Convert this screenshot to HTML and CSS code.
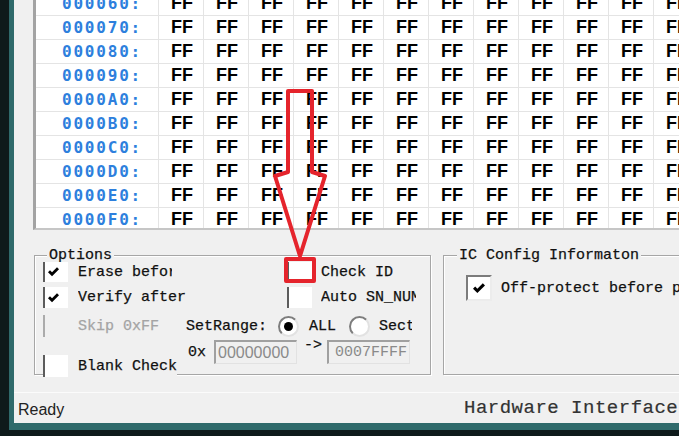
FILE: index.html
```html
<!DOCTYPE html>
<html>
<head>
<meta charset="utf-8">
<link rel="stylesheet" href="styles.css">
</head>
<body>
<div class="window">
  <div class="hexview">
    <div class="rows">
      <div class="row"><span class="addr">000060:</span><span class="ff">FF</span><span class="ff">FF</span><span class="ff">FF</span><span class="ff">FF</span><span class="ff">FF</span><span class="ff">FF</span><span class="ff">FF</span><span class="ff">FF</span><span class="ff">FF</span><span class="ff">FF</span><span class="ff">FF</span><span class="ff">FF</span></div>
      <div class="row"><span class="addr">000070:</span><span class="ff">FF</span><span class="ff">FF</span><span class="ff">FF</span><span class="ff">FF</span><span class="ff">FF</span><span class="ff">FF</span><span class="ff">FF</span><span class="ff">FF</span><span class="ff">FF</span><span class="ff">FF</span><span class="ff">FF</span><span class="ff">FF</span></div>
      <div class="row"><span class="addr">000080:</span><span class="ff">FF</span><span class="ff">FF</span><span class="ff">FF</span><span class="ff">FF</span><span class="ff">FF</span><span class="ff">FF</span><span class="ff">FF</span><span class="ff">FF</span><span class="ff">FF</span><span class="ff">FF</span><span class="ff">FF</span><span class="ff">FF</span></div>
      <div class="row"><span class="addr">000090:</span><span class="ff">FF</span><span class="ff">FF</span><span class="ff">FF</span><span class="ff">FF</span><span class="ff">FF</span><span class="ff">FF</span><span class="ff">FF</span><span class="ff">FF</span><span class="ff">FF</span><span class="ff">FF</span><span class="ff">FF</span><span class="ff">FF</span></div>
      <div class="row"><span class="addr">0000A0:</span><span class="ff">FF</span><span class="ff">FF</span><span class="ff">FF</span><span class="ff">FF</span><span class="ff">FF</span><span class="ff">FF</span><span class="ff">FF</span><span class="ff">FF</span><span class="ff">FF</span><span class="ff">FF</span><span class="ff">FF</span><span class="ff">FF</span></div>
      <div class="row"><span class="addr">0000B0:</span><span class="ff">FF</span><span class="ff">FF</span><span class="ff">FF</span><span class="ff">FF</span><span class="ff">FF</span><span class="ff">FF</span><span class="ff">FF</span><span class="ff">FF</span><span class="ff">FF</span><span class="ff">FF</span><span class="ff">FF</span><span class="ff">FF</span></div>
      <div class="row"><span class="addr">0000C0:</span><span class="ff">FF</span><span class="ff">FF</span><span class="ff">FF</span><span class="ff">FF</span><span class="ff">FF</span><span class="ff">FF</span><span class="ff">FF</span><span class="ff">FF</span><span class="ff">FF</span><span class="ff">FF</span><span class="ff">FF</span><span class="ff">FF</span></div>
      <div class="row"><span class="addr">0000D0:</span><span class="ff">FF</span><span class="ff">FF</span><span class="ff">FF</span><span class="ff">FF</span><span class="ff">FF</span><span class="ff">FF</span><span class="ff">FF</span><span class="ff">FF</span><span class="ff">FF</span><span class="ff">FF</span><span class="ff">FF</span><span class="ff">FF</span></div>
      <div class="row"><span class="addr">0000E0:</span><span class="ff">FF</span><span class="ff">FF</span><span class="ff">FF</span><span class="ff">FF</span><span class="ff">FF</span><span class="ff">FF</span><span class="ff">FF</span><span class="ff">FF</span><span class="ff">FF</span><span class="ff">FF</span><span class="ff">FF</span><span class="ff">FF</span></div>
      <div class="row"><span class="addr">0000F0:</span><span class="ff">FF</span><span class="ff">FF</span><span class="ff">FF</span><span class="ff">FF</span><span class="ff">FF</span><span class="ff">FF</span><span class="ff">FF</span><span class="ff">FF</span><span class="ff">FF</span><span class="ff">FF</span><span class="ff">FF</span><span class="ff">FF</span></div>
    </div>
  </div>

  <div class="panels">
    <div class="group options">
      <div class="group-title">Options</div>
      <div class="orow r1">
        <div class="cb left">
          <span class="box"><svg class="check" width="11" height="10" viewBox="0 0 11 10"><path d="M0 5.2 L2 3.2 L4 5.2 L9 0.2 L11 2.2 L4 9.2 Z"/></svg></span>
          <span class="lbl clip-erase">Erase before</span>
        </div>
        <div class="cb right">
          <span class="box"></span>
          <span class="lbl">Check ID</span>
        </div>
      </div>
      <div class="orow r2">
        <div class="cb left">
          <span class="box"><svg class="check" width="11" height="10" viewBox="0 0 11 10"><path d="M0 5.2 L2 3.2 L4 5.2 L9 0.2 L11 2.2 L4 9.2 Z"/></svg></span>
          <span class="lbl">Verify after</span>
        </div>
        <div class="cb right">
          <span class="box"></span>
          <span class="lbl clip-auto">Auto SN_NUM</span>
        </div>
      </div>
      <div class="orow r3">
        <div class="cb skip disabled">
          <span class="box"></span>
          <span class="lbl">Skip 0xFF</span>
        </div>
        <span class="txt">SetRange:</span>
        <span class="radio on"></span>
        <span class="txt all">ALL</span>
        <span class="radio off"></span>
        <span class="txt sect">Sect</span>
      </div>
      <div class="orow r4">
        <div class="cb blank">
          <span class="box"></span>
          <span class="lbl">Blank Check</span>
        </div>
        <span class="txt zerox">0x</span>
        <span class="field f1">00000000</span>
        <span class="txt arrow">-&gt;</span>
        <span class="field f2">0007FFFF</span>
      </div>
    </div>

    <div class="group ic">
      <div class="group-title">IC Config Informaton</div>
      <div class="icrow">
        <span class="box3d"><svg class="check" width="12" height="11" viewBox="0 0 11 10"><path d="M0 5.2 L2 3.2 L4 5.2 L9 0.2 L11 2.2 L4 9.2 Z"/></svg></span>
        <span class="lbl">Off-protect before programming</span>
      </div>
    </div>
  </div>

  <div class="statusbar">
    <span class="ready">Ready</span>
    <span class="hw">Hardware Interface</span>
  </div>
</div>

<svg class="annot" width="679" height="436" viewBox="0 0 679 436">
  <path d="M288 91 L312 91 L312 172 L325 176 L300 256 L275 176 L288 172 Z"/>
  <rect x="286" y="259" width="28" height="22"/>
</svg>
</body>
</html>
```

FILE: styles.css
```css
* { box-sizing: border-box; }
html, body { margin: 0; padding: 0; }
body {
  width: 679px;
  height: 436px;
  overflow: hidden;
  position: relative;
  background: #0e1a1b;
  font-family: "Liberation Mono", monospace;
  font-size: 15px;
  color: #111;
}

.window {
  margin-left: 9px;
  width: 720px;
  height: 430px;
  border-left: 5px solid #2f6a6b;
  border-bottom: 7px solid #2f6a6b;
  background: #f0f0f0;
  display: flex;
  flex-direction: column;
}

/* hex view */
.hexview {
  flex: none;
  margin-left: 19px;
  height: 230px;
  border-left: 3px solid #a3a3a3;
  border-bottom: 2px solid #c6c6c6;
  background: #fff;
  overflow: hidden;
}
.rows { margin-top: -8px; }
.row {
  display: grid;
  grid-template-columns: 123px repeat(12, 45px);
  height: 24px;
}
.row > span {
  border-right: 1px solid #e4e4e4;
  border-bottom: 1px solid #e4e4e4;
  line-height: 23px;
  white-space: nowrap;
  overflow: hidden;
}
.addr {
  padding-left: 26px;
  font-family: "DejaVu Sans Mono", monospace;
  font-weight: bold;
  font-size: 16px;
  letter-spacing: 1.8px;
  color: #2d7fdd;
}
.ff {
  padding-left: 12px;
  font-family: "Liberation Sans", Arial, sans-serif;
  font-weight: bold;
  font-size: 18px;
  color: #000;
}

/* panels */
.panels {
  flex: none;
  display: flex;
  margin: 25px 0 0 20px;
  height: 120px;
  -webkit-text-stroke: 0.25px currentColor;
}
.group {
  border: 1px solid #a6a6a6;
  box-shadow: inset 1px 1px 0 #fff, 1px 1px 0 #fff;
  display: flex;
  flex-direction: column;
}
.options { width: 397px; flex: none; }
.ic { margin-left: 12px; flex: 1; }
.group-title {
  align-self: flex-start;
  background: #f0f0f0;
  padding: 0 2px;
  line-height: 16px;
  margin: -8px 0 -2px 12px;
  white-space: nowrap;
}
.ic .group-title { margin-left: 13px; }

.orow {
  flex: none;
  display: flex;
  align-items: center;
  padding-left: 8px;
  white-space: nowrap;
}
.r1 { height: 20px; }
.r2 { height: 21px; margin-top: 5px; }
.r3 { height: 22px; margin-top: 7px; }
.r4 { height: 37px; margin-top: 3px; align-items: flex-start; }

.cb { display: flex; align-items: center; height: 100%; flex: none; }
.box {
  flex: none;
  width: 25px;
  height: 100%;
  border-left: 2px solid #5c5c5c;
  background: #fff;
  display: flex;
  align-items: center;
  padding-left: 3px;
}
.check path { fill: #000; stroke: none; }
.lbl { margin-left: 10px; white-space: nowrap; overflow: hidden; }
.left { width: 244px; }
.right .lbl { margin-left: 9px; }
.clip-erase { width: 94px; }
.clip-auto { width: 95px; }

.skip { width: 143px; }
.disabled .box { border-left-color: #ababab; background: transparent; }
.disabled .lbl { color: #a4a4a4; }

.radio {
  flex: none;
  width: 21px;
  height: 21px;
  margin-left: 11px;
  border-radius: 50%;
  border: 2px solid;
  border-color: #7d7d7d #e2e2e2 #e2e2e2 #7d7d7d;
  background: #fff;
  display: flex;
  align-items: center;
  justify-content: center;
}
.radio.on::after {
  content: "";
  width: 9px;
  height: 9px;
  border-radius: 50%;
  background: #000;
}
.radio.off { margin-left: 13px; }
.all { margin-left: 10px; }
.sect { margin-left: 9px; width: 33px; overflow: hidden; }

.blank { width: 134px; height: 22px; margin-top: 15px; background: #f0f0f0; }
.zerox { margin-left: 11px; margin-top: 4px; line-height: 18px; }
.field {
  flex: none;
  width: 83px;
  height: 24px;
  border-style: solid;
  border-width: 2px 1px 1px 2px;
  border-color: #a0a0a0 #e2e2e2 #e2e2e2 #a0a0a0;
  background: #f0f0f0;
  color: #8a8a8a;
  line-height: 21px;
  white-space: nowrap;
  overflow: hidden;
  -webkit-text-stroke: 0;
}
.f1 { margin-left: 8px; padding-left: 2px; font-family: "Liberation Sans", Arial, sans-serif; font-size: 16px; }
.arrow { margin-left: 7px; line-height: 12px; }
.f2 { margin-left: 5px; padding-left: 6px; }

.icrow { display: flex; align-items: center; margin: 13px 0 0 22px; white-space: nowrap; }
.box3d {
  flex: none;
  width: 26px;
  height: 26px;
  border: 2px solid;
  border-color: #7c7c7c #ececec #ececec #7c7c7c;
  background: #fff;
  display: flex;
  align-items: center;
  justify-content: center;
}
.icrow .lbl { margin-left: 9px; }

/* status bar */
.statusbar {
  flex: none;
  margin-top: 17px;
  height: 31px;
  display: flex;
  align-items: center;
  border-top: 1px solid #fbfbfb;
  white-space: nowrap;
}
.ready {
  width: 450px;
  padding: 3px 0 0 4px;
  font-family: "Liberation Sans", Arial, sans-serif;
  font-size: 16px;
  color: #222;
}
.hw { font-size: 19px; letter-spacing: 0.5px; color: #333; -webkit-text-stroke: 0.2px currentColor; }

/* red annotation overlay */
.annot {
  position: absolute;
  left: 0;
  top: 0;
  pointer-events: none;
}
.annot path, .annot rect {
  fill: none;
  stroke: #e5242c;
  stroke-width: 4;
  stroke-linejoin: round;
}
```
